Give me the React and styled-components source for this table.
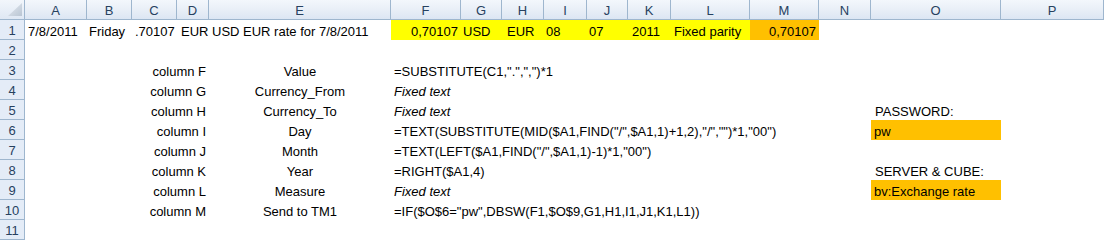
import React from "react";
import styled, { createGlobalStyle } from "styled-components";

const GlobalStyle = createGlobalStyle`
  html, body {
    margin: 0;
    padding: 0;
    background: #ffffff;
  }
`;

// largeurs des colonnes, en pixels, bordure comprise
const columns = [
  { key: "A", width: 62 },
  { key: "B", width: 45 },
  { key: "C", width: 45 },
  { key: "D", width: 32 },
  { key: "E", width: 182 },
  { key: "F", width: 70 },
  { key: "G", width: 41 },
  { key: "H", width: 42 },
  { key: "I", width: 43 },
  { key: "J", width: 41 },
  { key: "K", width: 43 },
  { key: "L", width: 79 },
  { key: "M", width: 69 },
  { key: "N", width: 52 },
  { key: "O", width: 130 },
  { key: "P", width: 103 },
];

const YELLOW = "#ffff00";
const ORANGE = "#ffc000";

const label = (col) => ({ text: `column ${col}`, align: "right" });
const centered = (text) => ({ text, align: "center" });
const fixed = { text: "Fixed text", italic: true };

const rows = [
  {
    A: { text: "7/8/2011" },
    B: { text: "Friday", indent: 2 },
    C: { text: ".70107" },
    D: { text: "EUR", indent: 4 },
    E: { text: "USD EUR rate for 7/8/2011" },
    F: { text: "0,70107", align: "right", bg: YELLOW },
    G: { text: "USD", indent: 2, bg: YELLOW },
    H: { text: "EUR", indent: 5, bg: YELLOW },
    I: { text: "08", indent: 2, bg: YELLOW },
    J: { text: "07", indent: 2, bg: YELLOW },
    K: { text: "2011", indent: 4, bg: YELLOW },
    L: { text: "Fixed parity", bg: YELLOW },
    M: { text: "0,70107", align: "right", bg: ORANGE },
  },
  {},
  {
    D: label("F"),
    E: centered("Value"),
    F: { text: '=SUBSTITUTE(C1,".",",")*1' },
  },
  { D: label("G"), E: centered("Currency_From"), F: fixed },
  {
    D: label("H"),
    E: centered("Currency_To"),
    F: fixed,
    O: { text: "PASSWORD:", indent: 4 },
  },
  {
    D: label("I"),
    E: centered("Day"),
    F: {
      text: '=TEXT(SUBSTITUTE(MID($A1,FIND("/",$A1,1)+1,2),"/","")*1,"00")',
    },
    O: { text: "pw", bg: ORANGE },
  },
  {
    D: label("J"),
    E: centered("Month"),
    F: { text: '=TEXT(LEFT($A1,FIND("/",$A1,1)-1)*1,"00")' },
  },
  {
    D: label("K"),
    E: centered("Year"),
    F: { text: "=RIGHT($A1,4)" },
    O: { text: "SERVER & CUBE:", indent: 4 },
  },
  {
    D: label("L"),
    E: centered("Measure"),
    F: fixed,
    O: { text: "bv:Exchange rate", bg: ORANGE },
  },
  {
    D: label("M"),
    E: centered("Send to TM1"),
    F: { text: '=IF($O$6="pw",DBSW(F1,$O$9,G1,H1,I1,J1,K1,L1))' },
  },
  {},
];

const Sheet = styled.div`
  display: grid;
  grid-template-columns: 25px ${columns.map((c) => `${c.width}px`).join(" ")};
  grid-auto-rows: 20px;
  width: 1104px;
  font-family: "Liberation Sans", Arial, sans-serif;
  font-size: 13px;
  color: #000000;
  overflow: hidden;
`;

const Corner = styled.div`
  display: flex;
  align-items: flex-end;
  justify-content: flex-end;
  padding: 0 2px 3px 0;
  box-sizing: border-box;
  background: linear-gradient(#f2f6fb, #dfe8f4);
  border-right: 1px solid #9eb6ce;
  border-bottom: 1px solid #9eb6ce;
`;

const ColumnHeader = styled.div`
  display: flex;
  align-items: center;
  justify-content: center;
  box-sizing: border-box;
  background: linear-gradient(#f3f7fc 0%, #e9eff7 50%, #dce6f3 100%);
  border-right: 1px solid #9eb6ce;
  border-bottom: 1px solid #9eb6ce;
  color: #27415f;
  padding-top: 1px;
`;

const RowHeader = styled.div`
  display: flex;
  align-items: center;
  justify-content: center;
  box-sizing: border-box;
  background: #e4ecf7;
  border-right: 1px solid #9eb6ce;
  border-bottom: 1px solid #9eb6ce;
  color: #27415f;
  padding-top: 2px;
`;

const Cell = styled.div`
  display: flex;
  align-items: center;
  justify-content: ${({ $align }) =>
    $align === "right" ? "flex-end" : $align === "center" ? "center" : "flex-start"};
  min-width: 0;
  box-sizing: border-box;
  padding: 2px 3px 0 ${({ $indent }) => $indent ?? 3}px;
  background: ${({ $bg }) => $bg || "transparent"};
  font-style: ${({ $italic }) => ($italic ? "italic" : "normal")};
  white-space: nowrap;
  overflow: visible;
`;

const CellText = styled.span`
  flex-shrink: 0;
`;

const CornerMark = () => (
  <svg width="14" height="13" viewBox="0 0 14 13">
    <defs>
      <linearGradient id="cornerGrad" x1="0" y1="0" x2="1" y2="1">
        <stop offset="0" stopColor="#e6ebf1" />
        <stop offset="1" stopColor="#b9c5d3" />
      </linearGradient>
    </defs>
    <polygon points="14,0 14,13 0,13" fill="url(#cornerGrad)" />
  </svg>
);

const App = () => (
  <>
    <GlobalStyle />
    <Sheet>
      <Corner>
        <CornerMark />
      </Corner>
      {columns.map((col) => (
        <ColumnHeader key={col.key}>{col.key}</ColumnHeader>
      ))}
      {rows.map((row, index) => (
        <React.Fragment key={index}>
          <RowHeader>{index + 1}</RowHeader>
          {columns.map((col) => {
            const cell = row[col.key];
            return (
              <Cell
                key={col.key}
                $align={cell?.align}
                $bg={cell?.bg}
                $italic={cell?.italic}
                $indent={cell?.indent}
              >
                {cell && <CellText>{cell.text}</CellText>}
              </Cell>
            );
          })}
        </React.Fragment>
      ))}
    </Sheet>
  </>
);

export default App;
